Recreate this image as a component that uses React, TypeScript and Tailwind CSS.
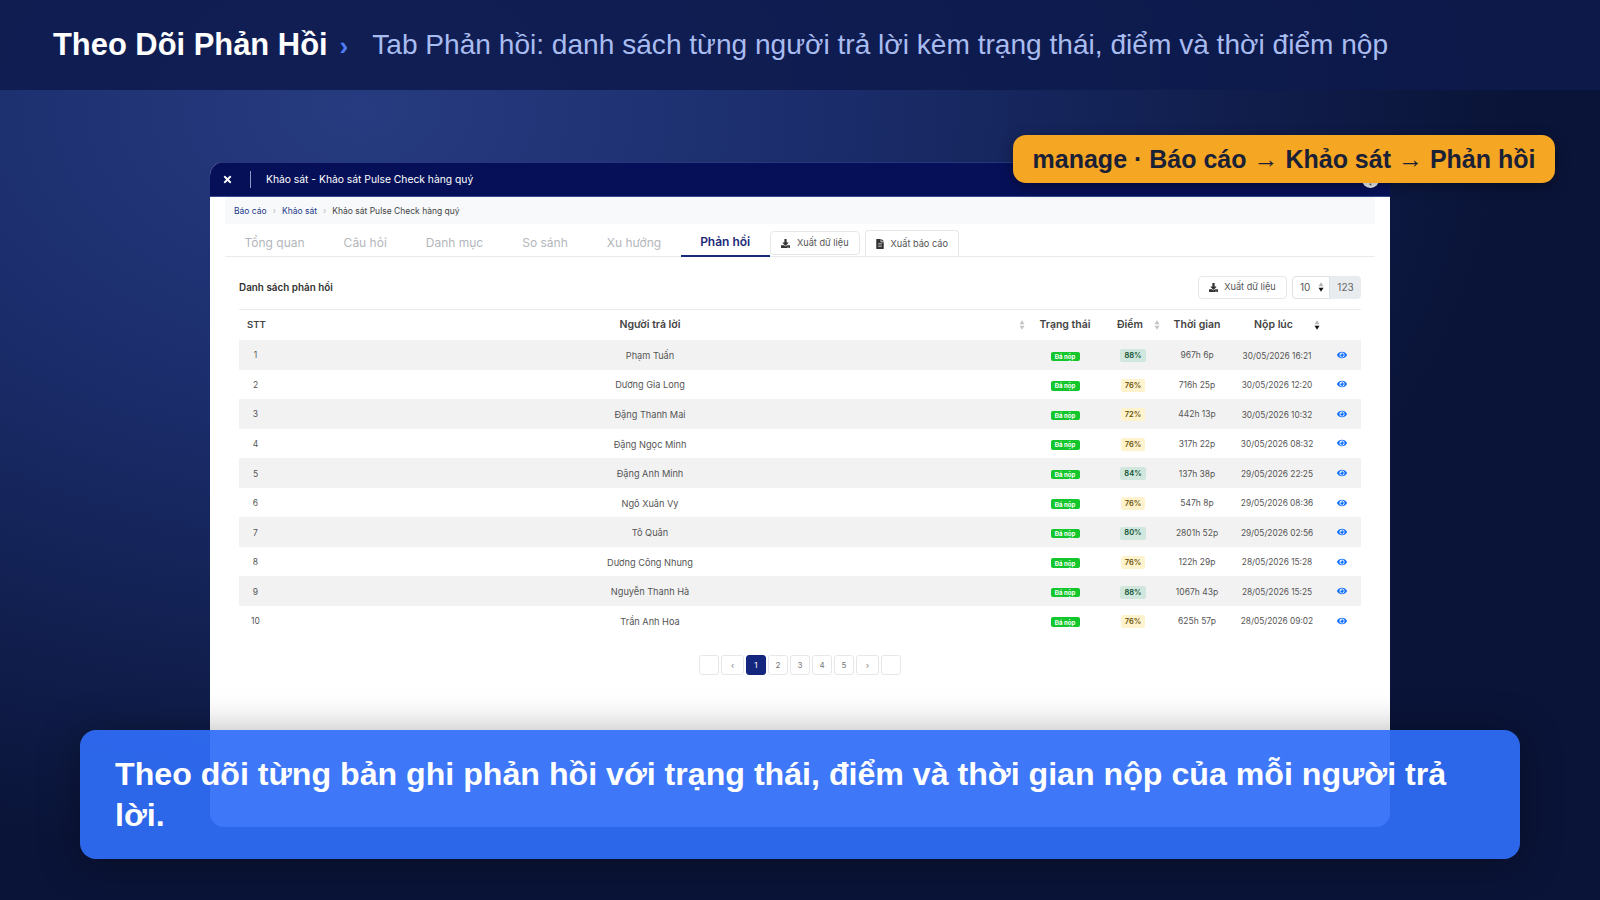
import { FaDownload, FaEye, FaFileAlt, FaTimes } from 'react-icons/fa';

const responses = [
  { id: 1, name: 'Phạm Tuấn', score: 88, time: '967h 6p', at: '30/05/2026 16:21' },
  { id: 2, name: 'Dương Gia Long', score: 76, time: '716h 25p', at: '30/05/2026 12:20' },
  { id: 3, name: 'Đặng Thanh Mai', score: 72, time: '442h 13p', at: '30/05/2026 10:32' },
  { id: 4, name: 'Đặng Ngọc Minh', score: 76, time: '317h 22p', at: '30/05/2026 08:32' },
  { id: 5, name: 'Đặng Anh Minh', score: 84, time: '137h 38p', at: '29/05/2026 22:25' },
  { id: 6, name: 'Ngô Xuân Vy', score: 76, time: '547h 8p', at: '29/05/2026 08:36' },
  { id: 7, name: 'Tô Quân', score: 80, time: '2801h 52p', at: '29/05/2026 02:56' },
  { id: 8, name: 'Dương Công Nhung', score: 76, time: '122h 29p', at: '28/05/2026 15:28' },
  { id: 9, name: 'Nguyễn Thanh Hà', score: 88, time: '1067h 43p', at: '28/05/2026 15:25' },
  { id: 10, name: 'Trần Anh Hoa', score: 76, time: '625h 57p', at: '28/05/2026 09:02' },
];

const tabs = ['Tổng quan', 'Câu hỏi', 'Danh mục', 'So sánh', 'Xu hướng'];

const gridCols = 'grid grid-cols-[33px_756px_74px_62px_66px_94px_36px] items-center';

function SortIcon({ active }: { active?: boolean }) {
  return (
    <svg viewBox="0 0 8 14" className="w-[6px] h-[10px]">
      <path d="M4 0.5 7.5 6H0.5Z" fill={active ? '#b5b5b5' : '#c4c4c4'} />
      <path d="M4 13.5 0.5 8H7.5Z" fill={active ? '#111' : '#c4c4c4'} />
    </svg>
  );
}

function HeadCell({ label, sort, active, className }: { label: string; sort?: string; active?: boolean; className?: string }) {
  return (
    <div className={`relative text-center ${className ?? ''}`}>
      {label}
      {sort && (
        <span className={`absolute top-1/2 -translate-y-1/2 flex ${sort}`}>
          <SortIcon active={active} />
        </span>
      )}
    </div>
  );
}

function PageButton({ label, active, wide }: { label?: string; active?: boolean; wide?: boolean }) {
  return (
    <div
      className={`h-5 flex items-center justify-center rounded-[3px] border text-[8px] ${wide ? 'w-[23px]' : 'w-5'} ${
        active ? 'bg-[#14267e] border-[#14267e] text-white' : 'bg-white border-[#e6e7ea] text-[#777]'
      }`}
    >
      {label}
    </div>
  );
}

export default function App() {
  return (
    <div className="relative w-[1600px] h-[900px] overflow-hidden flex flex-col bg-[radial-gradient(ellipse_1150px_760px_at_360px_110px,#273b80_0%,#1a2c6a_42%,#0a1438_100%)] font-['Liberation_Sans',sans-serif]">
      <header className="h-[90px] shrink-0 flex items-center pl-[53px] pt-[1px] bg-[#0d1a4c]/85">
        <h1 className="text-[30.9px] font-bold text-white leading-none">Theo Dõi Phản Hồi</h1>
        <span className="ml-[12px] text-[26px] font-bold text-[#4f7df5] leading-none">›</span>
        <p className="ml-[24px] text-[28.1px] text-[#a9bcf0] leading-none">
          Tab Phản hồi: danh sách từng người trả lời kèm trạng thái, điểm và thời điểm nộp
        </p>
      </header>

      <main className="flex-1 pl-[210px] pt-[72px]">
        <div className="w-[1180px] h-[665px] rounded-[14px] overflow-hidden bg-white font-['Inter',sans-serif] flex flex-col">
          <div className="h-[35px] shrink-0 flex items-center bg-[#061059] border-t border-[#26367f] border-b border-b-[#3a4a90] pl-[12px] text-white">
            <FaTimes className="w-[11px] h-[11px]" />
            <span className="ml-[17px] w-px h-[17px] bg-[#8f97c2]" />
            <span className="ml-[15px] text-[10.3px]">Khảo sát - Khảo sát Pulse Check hàng quý</span>
            <svg viewBox="0 0 17 17" className="ml-auto mr-[11px] w-[17px] h-[17px]">
              <circle cx="8.5" cy="8.5" r="8.5" fill="#fff" />
              <circle cx="8.5" cy="13.5" r="1" fill="#666" />
            </svg>
          </div>

          <div className="flex-1 px-[15px] flex flex-col">
            <div className="h-[27px] shrink-0 flex items-center pl-[9px] pt-[1px] bg-[#f8f9fa] text-[8.5px] text-[#444]">
              <span className="text-[#1e3a8a]">Báo cáo</span>
              <span className="mx-[6px] text-[#bbb]">›</span>
              <span className="text-[#1e3a8a]">Khảo sát</span>
              <span className="mx-[6px] text-[#bbb]">›</span>
              <span>Khảo sát Pulse Check hàng quý</span>
            </div>

            <div className="h-[33px] shrink-0 flex items-end border-b border-[#e9eaec] text-[12px] text-[#b3b6bb]">
              {tabs.map((t) => (
                <div key={t} className="h-[32px] px-[19.5px] pt-[5px] flex items-center">
                  {t}
                </div>
              ))}
              <div className="h-[32px] px-[19.5px] pt-[3px] flex items-center font-semibold text-[#1a2a78] border-b-2 border-[#162a78] mb-[-1px]">
                Phản hồi
              </div>
              <div className="mb-[1px] h-[24px] w-[90px] flex items-center justify-center gap-[7px] rounded-[4px] border border-[#e6e7ea] text-[9.2px] text-[#555]">
                <FaDownload className="w-[9px] h-[9px] text-[#333]" />
                Xuất dữ liệu
              </div>
              <div className="ml-[5px] h-[26px] w-[94px] flex items-center justify-center gap-[7px] rounded-t-[4px] border border-b-0 border-[#e6e7ea] text-[9.2px] text-[#555]">
                <FaFileAlt className="w-[8px] h-[10px] text-[#333]" />
                Xuất báo cáo
              </div>
            </div>

            <div className="px-[14px]">
              <div className="h-[53px] pt-[8px] flex items-center justify-between border-b border-[#e9eaec]">
                <span className="text-[9.9px] font-semibold text-[#333]">Danh sách phản hồi</span>
                <div className="flex items-center h-[23px] text-[9.2px] text-[#555]">
                  <div className="w-[89px] h-full flex items-center justify-center gap-[6px] rounded-[4px] border border-[#e6e7ea]">
                    <FaDownload className="w-[9px] h-[9px] text-[#333]" />
                    Xuất dữ liệu
                  </div>
                  <div className="ml-[5px] w-[38px] h-full flex items-center justify-between pl-[7px] pr-[5px] rounded-l-[4px] border border-[#dfe1e4] text-[10px]">
                    10
                    <SortIcon active />
                  </div>
                  <div className="w-[31px] h-full flex items-center justify-center rounded-r-[4px] bg-[#e9ecef] text-[10px] text-[#666]">123</div>
                </div>
              </div>

              <div className={`${gridCols} h-[30px] text-[10.5px] font-semibold text-[#444]`}>
                <div className="pl-[8px] text-[9.5px]">STT</div>
                <HeadCell label="Người trả lời" sort="right-[3px]" />
                <HeadCell label="Trạng thái" />
                <HeadCell label="Điểm" sort="right-[4px]" className="pr-[6px]" />
                <HeadCell label="Thời gian" />
                <HeadCell label="Nộp lúc" sort="right-[4px]" active className="pr-[7px]" />
                <div />
              </div>

              {responses.map((r) => (
                <div key={r.id} className={`${gridCols} h-[29.55px] text-center text-[8.5px] text-[#555] ${r.id % 2 === 1 ? 'bg-[#f2f2f2]' : 'bg-white'}`}>
                  <div className="pt-[2px]">{r.id}</div>
                  <div className="pt-[2px] text-[9.2px]">{r.name}</div>
                  <div className="flex justify-center">
                    <span className="w-[29px] h-[9.5px] flex items-center justify-center rounded-[2px] bg-[#12c62c] text-[6px] font-bold text-white mt-[3px]">Đã nộp</span>
                  </div>
                  <div className="flex justify-center pt-[2px]">
                    <span className={`px-[4px] h-[13px] flex items-center rounded-[2px] text-[7.5px] font-semibold ${r.score >= 80 ? 'bg-[#d1e7dd] text-[#0f5132]' : 'bg-[#fff3cd] text-[#664d03]'}`}>
                      {r.score}%
                    </span>
                  </div>
                  <div className="pt-[2px]">{r.time}</div>
                  <div className="pt-[2px] text-[8.3px]">{r.at}</div>
                  <div className="flex justify-center">
                    <FaEye className="w-[10px] h-[10px] text-[#0d6efd]" />
                  </div>
                </div>
              ))}

              <div className="mt-[20px] flex justify-center gap-[2px]">
                <PageButton />
                <PageButton label="‹" wide />
                <PageButton label="1" active />
                <PageButton label="2" />
                <PageButton label="3" />
                <PageButton label="4" />
                <PageButton label="5" />
                <PageButton label="›" wide />
                <PageButton />
              </div>
            </div>
          </div>
        </div>
      </main>

      <div className="absolute left-[1013px] top-[135px] h-[48px] w-[542px] pt-[1px] flex items-center justify-center rounded-[13px] bg-[#f5a623] text-[25px] font-bold text-[#1a2035] shadow-[0_4px_14px_rgba(0,0,0,0.35)]">
        manage · Báo cáo → Khảo sát → Phản hồi
      </div>

      <div className="absolute left-[80px] top-[730px] w-[1440px] h-[129px] pl-[35px] pr-[60px] pt-[24px] rounded-[16px] bg-[#2f6df6]/93 text-[32.15px] font-bold leading-[41px] text-white shadow-[0_4px_40px_rgba(0,0,0,0.35)]">
        Theo dõi từng bản ghi phản hồi với trạng thái, điểm và thời gian nộp của mỗi người trả lời.
      </div>
    </div>
  );
}
